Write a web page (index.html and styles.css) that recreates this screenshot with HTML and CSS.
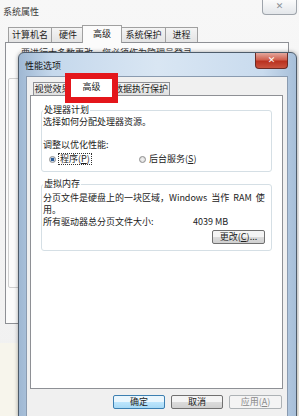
FILE: index.html
```html
<!DOCTYPE html>
<html>
<head>
  <meta charset="utf-8">
  <link rel="stylesheet" href="styles.css">
</head>
<body>
  <div class="outer">
    <div class="outer-title">
      <span class="outer-caption">系统属性</span>
      <span class="outer-close">✕</span>
    </div>
    <div class="outer-tabs">
      <span class="otab w43">计算机名</span>
      <span class="otab w33">硬件</span>
      <span class="otab sel w37">高级</span>
      <span class="otab w44">系统保护</span>
      <span class="otab w32">进程</span>
    </div>
    <div class="outer-panel">
      <p class="outer-note">要进行大多数更改，您必须作为管理员登录。</p>
      <div class="outer-group"></div>
    </div>
    <div class="outer-foot"></div>
  </div>

  <div class="dlg">
    <div class="dlg-title">
      <span class="dlg-caption">性能选项</span>
      <span class="dlg-close">✕</span>
    </div>
    <div class="dlg-body">
      <div class="tabs">
        <span class="tab w38">视觉效果</span>
        <span class="tab sel w41">高级</span>
        <span class="tab w58">数据执行保护</span>
      </div>
      <div class="panel">
        <fieldset class="group g1">
          <legend>处理器计划</legend>
          <p class="line m2">选择如何分配处理器资源。</p>
          <p class="line m13">调整以优化性能:</p>
          <div class="radios">
            <span class="radio-item first"><span class="radio on"></span><span class="focus">程序(<u>P</u>)</span></span>
            <span class="radio-item"><span class="radio"></span>后台服务(<u>S</u>)</span>
          </div>
        </fieldset>
        <fieldset class="group g2">
          <legend>虚拟内存</legend>
          <p class="line tall wide m3">分页文件是硬盘上的一块区域，Windows 当作 RAM 使</p>
          <p class="line tall">用。</p>
          <p class="line tall size"><span class="size-label">所有驱动器总分页文件大小:</span><span>4039 MB</span></p>
          <div class="change-row">
            <span class="btn change">更改(<u>C</u>)...</span>
          </div>
        </fieldset>
      </div>
      <div class="buttons">
        <span class="btn default">确定</span>
        <span class="btn">取消</span>
        <span class="btn disabled">应用(<u>A</u>)</span>
      </div>
    </div>
  </div>

  <div class="mark"></div>
</body>
</html>
```

FILE: styles.css
```css
body {
  margin: 0;
  width: 299px;
  height: 416px;
  overflow: hidden;
  position: relative;
  background-color: #f3f3f3;
  font-family: "Noto Sans CJK SC", "Liberation Sans", sans-serif;
  font-size: 9px;
  line-height: 10px;
  color: #222;
}
p {
  margin: 0;
}
u {
  text-decoration: underline;
}

/* background window */
.outer {
  height: 416px;
  display: flex;
  flex-direction: column;
  background: linear-gradient(#f7f7f7, #f0f0f0);
}
.outer-title {
  height: 25px;
  display: flex;
  justify-content: space-between;
  align-items: flex-start;
}
.outer-caption {
  margin: 7px 0 0 3px;
  color: #3a3a3a;
}
.outer-close {
  width: 33px;
  height: 14px;
  margin-right: 2px;
  border: 1px solid #9ea4ab;
  border-top: 0;
  border-radius: 0 0 4px 4px;
  background: linear-gradient(#fbfbfb, #e3e6ea);
  color: #8a8f96;
  font-family: "DejaVu Sans", sans-serif;
  font-size: 9px;
  line-height: 13px;
  text-align: center;
}
.outer-tabs {
  height: 17px;
  display: flex;
  align-items: flex-end;
  padding-left: 8px;
}
.otab {
  box-sizing: border-box;
  height: 15px;
  border: 1px solid #a0a0a0;
  border-bottom: 0;
  margin-right: -1px;
  background: linear-gradient(#f4f4f4, #e4e4e4);
  text-align: center;
  line-height: 14px;
  color: #222;
}
.otab.sel {
  height: 18px;
  margin: 0 -1px -1px -2px;
  background: #fbfbfb;
  position: relative;
  line-height: 15px;
}
.w32 { width: 33px; }
.w33 { width: 34px; }
.w37 { width: 40px; }
.w43 { width: 44px; }
.w44 { width: 45px; }
.w38 { width: 39px; }
.w41 { width: 43px; }
.w58 { width: 58px; }

.outer-panel {
  box-sizing: border-box;
  margin-left: 5px;
  width: 284px;
  height: 282px;
  border: 1px solid #8e9095;
  background-color: #fbfbfb;
}
.outer-note {
  margin: 5px 0 0 15px;
  color: #333;
  white-space: nowrap;
}
.outer-group {
  margin: 20px 0 0 2px;
  height: 208px;
  border: 1px solid #cfcfcf;
  border-radius: 2px;
}
.outer-foot {
  margin-top: 19px;
  flex: 1;
  background-color: #f7f5ec;
}

/* performance options dialog */
.dlg {
  position: absolute;
  left: 18px;
  top: 52px;
  width: 279px;
  height: 366px;
  box-sizing: border-box;
  border: 1px solid #4e5c6b;
  border-radius: 6px 6px 0 0;
  background: linear-gradient(90deg, #9fb8d3, #c5d8ec 12%, #d9e6f3 50%, #c9dbee 88%, #a7bfd9);
  box-shadow: 0 0 4px rgba(0, 0, 0, 0.35);
  display: flex;
  flex-direction: column;
}
.dlg-title {
  height: 23px;
  display: flex;
  justify-content: space-between;
  align-items: flex-start;
}
.dlg-caption {
  margin: 8px 0 0 6px;
  color: #111;
}
.dlg-close {
  width: 33px;
  height: 16px;
  margin-right: 8px;
  border: 1px solid #6b2b25;
  border-top: 0;
  border-radius: 0 0 4px 4px;
  background: linear-gradient(#e4a79d, #d0604f 45%, #b9311f 55%, #c9533f);
  color: #fff;
  font-family: "DejaVu Sans", sans-serif;
  font-weight: bold;
  font-size: 9px;
  line-height: 15px;
  text-align: center;
  box-sizing: border-box;
}
.dlg-body {
  flex: 1;
  margin: 0 8px 0 7px;
  border: 1px solid #8a9bb0;
  border-bottom: 0;
  background-color: #f0f0f0;
  display: flex;
  flex-direction: column;
}
.tabs {
  height: 18px;
  display: flex;
  align-items: flex-end;
  padding-left: 6px;
}
.tab {
  box-sizing: border-box;
  height: 13px;
  border: 1px solid #8e9095;
  border-bottom: 0;
  margin-right: -1px;
  background: linear-gradient(#f3f3f3, #e0e0e0);
  text-align: center;
  line-height: 12px;
  white-space: nowrap;
}
.tab.sel {
  height: 18px;
  margin: 0 -1px -1px -1px;
  background: #ffffff;
  position: relative;
  line-height: 16px;
}
.panel {
  box-sizing: border-box;
  margin-left: 3px;
  width: 253px;
  height: 294px;
  border: 1px solid #8e9095;
  background-color: #ffffff;
  padding: 0 10px;
}
.group {
  margin: 9px 0 0 0;
  padding: 0 0 0 1px;
  border: 1px solid #d5dfe5;
  border-radius: 3px;
  min-width: 0;
}
.group legend {
  padding: 0 1px;
  line-height: 10px;
}
.g1 {
  padding-bottom: 7px;
}
.g2 {
  margin-top: 7px;
  padding-bottom: 6px;
}
.line {
  white-space: nowrap;
}
.line.tall {
  line-height: 12px;
}
.line.wide {
  word-spacing: 2px;
}
.m2 { margin-top: 2px; }
.m3 { margin-top: 3px; }
.m13 { margin-top: 13px; }

.radios {
  margin: 4px 0 0 6px;
  display: flex;
  align-items: center;
}
.radio-item {
  display: flex;
  align-items: center;
}
.radio-item.first {
  width: 90px;
}
.radio {
  box-sizing: border-box;
  width: 7px;
  height: 7px;
  border: 1px solid #8d8d8d;
  border-radius: 50%;
  background: radial-gradient(#f4f4f4, #d6d6d6);
  margin-right: 3px;
}
.radio.on {
  background: radial-gradient(circle, #2c5d9a 0 1.5px, #c9d6e6 2px);
}
.focus {
  outline: 1px dotted #333;
  padding: 0 1px;
}
.size {
  display: flex;
}
.size-label {
  width: 150px;
}
.change-row {
  margin-top: 2px;
  display: flex;
  justify-content: flex-end;
  padding-right: 6px;
}

.btn {
  box-sizing: border-box;
  width: 52px;
  height: 14px;
  border: 1px solid #707070;
  border-radius: 2px;
  background: linear-gradient(#f4f4f4 50%, #dcdcdc 50%, #d0d0d0);
  text-align: center;
  line-height: 12px;
  white-space: nowrap;
}
.btn.change {
  width: 53px;
}
.buttons {
  margin-top: 6px;
  display: flex;
  justify-content: flex-end;
  gap: 6px;
  padding-right: 5px;
}
.btn.default {
  border-color: #3c7fb1;
  background: linear-gradient(#eaf6fd 50%, #bee6fd 50%, #a7d9f5);
}
.btn.disabled {
  width: 53px;
  border-color: #adb2b5;
  background: #f4f4f4;
  color: #8a8a8a;
}

/* red highlight drawn over the screenshot */
.mark {
  position: absolute;
  left: 65px;
  top: 73px;
  width: 53px;
  height: 30px;
  box-sizing: border-box;
  border: 6px solid #e4161b;
}
```
